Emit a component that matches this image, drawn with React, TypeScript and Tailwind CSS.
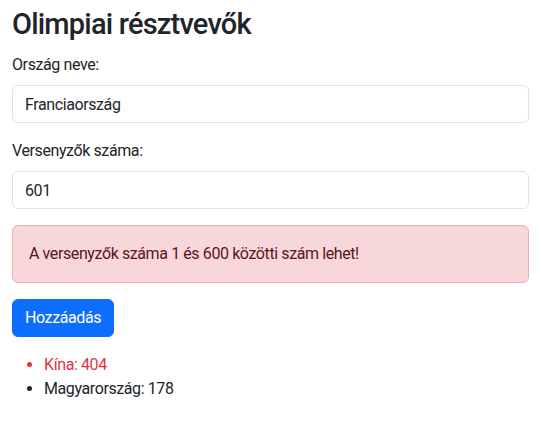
import React from 'react';

const App = () => {
  const [nev, setNev] = React.useState('Franciaország');
  const [szam, setSzam] = React.useState('601');

  return (
    <div className="px-3 pt-[6px] text-[16px] leading-6 tracking-[-0.4px] text-[#212529] font-['Roboto','Liberation_Sans',sans-serif]">
      <h1 className="text-[29px] leading-[36px] font-medium tracking-[-0.8px] mb-[11px]">Olimpiai résztvevők</h1>

      <div className="mb-4">
        <label className="block mb-2">Ország neve:</label>
        <input
          className="block w-full h-[38px] px-3 py-1.5 border border-[#dee2e6] rounded-md outline-none"
          value={nev}
          onChange={(e) => setNev(e.target.value)}
        />
      </div>

      <div className="mb-4">
        <label className="block mb-2">Versenyzők száma:</label>
        <input
          className="block w-full h-[38px] px-3 py-1.5 border border-[#dee2e6] rounded-md outline-none"
          value={szam}
          onChange={(e) => setSzam(e.target.value)}
        />
      </div>

      <div className="mb-4 p-4 border border-[#f1aeb5] bg-[#f8d7da] text-[#58151c] rounded-md">
        A versenyzők száma 1 és 600 közötti szám lehet!
      </div>

      <button className="mb-4 h-[38px] px-3 border border-[#0d6efd] bg-[#0d6efd] text-white rounded-md">
        Hozzáadás
      </button>

      <ul className="list-disc pl-8">
        <li className="text-[#dc3545]">Kína: 404</li>
        <li>Magyarország: 178</li>
      </ul>
    </div>
  );
};

export default App;
